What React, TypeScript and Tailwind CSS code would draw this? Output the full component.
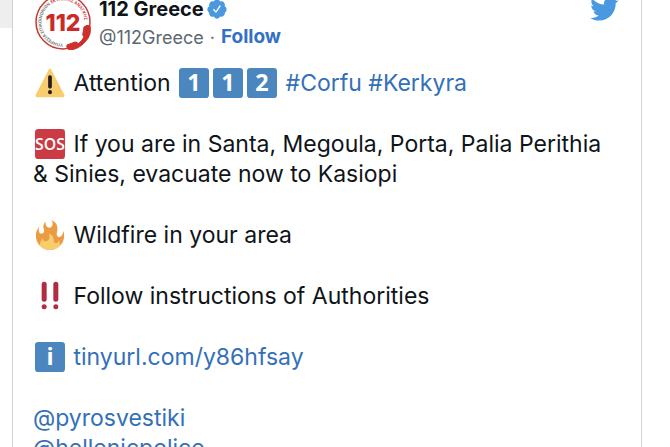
import React from 'react';

const KeycapEmoji: React.FC<{ label: string }> = ({ label }) => (
  <svg viewBox="0 0 36 36" className="mx-0.5 inline-block size-[30px] align-[-7px]">
    <rect width="36" height="36" rx="4" fill="#4c86be" />
    <text x="18" y="28" textAnchor="middle" fontSize="28" fontWeight="700" fill="#fff" fontFamily="Open Sans, sans-serif">
      {label}
    </text>
  </svg>
);

const WarningEmoji = () => (
  <svg viewBox="0 0 36 36" className="mx-0.5 inline-block size-[30px] align-[-7px]">
    <path fill="#f7cd6e" d="M2.653 35C.811 35-.001 33.662.847 32.027L16.456 1.972c.849-1.635 2.238-1.635 3.087 0l15.609 30.056c.85 1.634.037 2.972-1.805 2.972H2.653z" />
    <path fill="#231f20" d="M15.583 28.953a2.421 2.421 0 0 1 2.419-2.418 2.421 2.421 0 0 1 2.418 2.418 2.422 2.422 0 0 1-2.418 2.419 2.421 2.421 0 0 1-2.419-2.419zm.186-18.293c0-1.302.961-2.108 2.232-2.108 1.241 0 2.233.837 2.233 2.108v11.938c0 1.271-.992 2.108-2.233 2.108-1.271 0-2.232-.807-2.232-2.108V10.66z" />
  </svg>
);

const SosEmoji = () => (
  <svg viewBox="0 0 36 36" className="mx-0.5 inline-block size-[30px] align-[-7px]">
    <rect width="36" height="36" rx="4" fill="#cb3b46" />
    <text x="18" y="25" textAnchor="middle" fontSize="19" fontWeight="600" fill="#fff" fontFamily="Open Sans, sans-serif">
      SOS
    </text>
  </svg>
);

const FireEmoji = () => (
  <svg viewBox="0 0 36 36" className="mx-0.5 inline-block size-[30px] align-[-7px]">
    <path fill="#eb9c42" d="M35 19c0-2.062-.367-4.039-1.04-5.868-.46 5.389-3.333 8.157-6.335 6.868-2.812-1.208-.917-5.917-.777-8.164.236-3.809-.012-8.169-6.931-11.794 2.875 5.5.333 8.917-2.333 9.125-2.958.231-5.667-2.542-4.667-7.042-3.238 2.386-3.332 6.402-2.333 9 1.042 2.708-.042 4.958-2.583 5.208-2.84.28-4.418-3.041-2.963-8.333C2.52 10.965 1 14.805 1 19c0 9.389 7.611 17 17 17s17-7.611 17-17z" />
    <path fill="#f7cd6e" d="M28.394 23.999c.148 3.084-2.561 4.293-4.019 3.709-2.106-.843-1.541-2.291-2.083-5.291s-2.625-5.083-5.708-6c2.25 6.333-1.247 8.667-3.08 9.084-1.872.426-3.753-.001-3.968-4.007C7.352 23.668 6 26.676 6 30c0 .368.023.73.055 1.09C9.125 34.124 13.342 36 18 36s8.875-1.876 11.945-4.91c.032-.36.055-.722.055-1.09 0-2.187-.584-4.236-1.606-6.001z" />
  </svg>
);

const BangEmoji = () => (
  <svg viewBox="0 0 36 36" className="mx-0.5 inline-block size-[30px] align-[-7px]" fill="#b32b42">
    <rect x="8" y="1" width="6" height="24" rx="3" />
    <circle cx="11" cy="31" r="3" />
    <rect x="22" y="1" width="6" height="24" rx="3" />
    <circle cx="25" cy="31" r="3" />
  </svg>
);

const Avatar = () => (
  <svg viewBox="0 0 56 56" className="size-14 shrink-0" aria-label="112 Greece">
    <defs>
      <path id="ring" d="M28 49.500a21.500 21.500 0 1 1 0-43 21.500 21.500 0 1 1 0 43" />
    </defs>
    <circle cx="28" cy="28" r="27" fill="#fff" stroke="#c23a36" strokeWidth="1.500" />
    <text fontSize="4.500" fontWeight="600" fontFamily="Roboto, sans-serif" fill="#77716f">
      <textPath href="#ring">
        ΥΠΗΡΕΣΙΑ ΕΠΙΚΟΙΝΩΝΙΩΝ <tspan fill="#c23a36">ΕΚΤΑΚΤΗΣ ΑΝΑΓΚΗΣ</tspan>
      </textPath>
    </text>
    <text x="28" y="37" textAnchor="middle" fontSize="23" fontWeight="800" fontFamily="Inter, sans-serif" fill="#cc2a27">
      112
    </text>
    {/* handset */}
    <path d="M49 33q3-3 6-1q2 9-5 16q-6 7-15 8q-4-1-3-5l8-3q3 0 3 2q4-3 6-7q-2-2-1-4z" fill="#cf2f2a" stroke="#cf2f2a" strokeLinejoin="round" />
  </svg>
);

const VerifiedBadge = () => (
  <svg viewBox="0 0 24 24" className="size-[22px]" fill="#4a99e0" aria-label="Verified account">
    <path d="M22.5 12.5c0-1.58-.875-2.95-2.148-3.6.154-.435.238-.905.238-1.4 0-2.21-1.71-3.998-3.818-3.998-.47 0-.92.084-1.336.25C14.818 2.415 13.51 1.5 12 1.5s-2.816.917-3.437 2.25c-.415-.165-.866-.25-1.336-.25-2.11 0-3.818 1.79-3.818 4 0 .494.083.964.237 1.4-1.272.65-2.147 2.018-2.147 3.6 0 1.495.782 2.798 1.942 3.486-.02.17-.032.34-.032.514 0 2.21 1.708 4 3.818 4 .47 0 .92-.086 1.335-.25.62 1.334 1.926 2.25 3.437 2.25 1.512 0 2.818-.916 3.437-2.25.415.163.865.248 1.336.248 2.11 0 3.818-1.79 3.818-4 0-.174-.012-.344-.033-.513 1.158-.687 1.943-1.99 1.943-3.484zm-6.616-3.334l-4.334 6.5c-.145.217-.382.334-.625.334-.143 0-.288-.04-.416-.126l-.115-.094-2.415-2.415c-.293-.293-.293-.768 0-1.06s.768-.294 1.06 0l1.77 1.767 3.825-5.74c.23-.345.696-.436 1.04-.207.346.23.44.696.21 1.04z" />
  </svg>
);

const TwitterBird = () => (
  <svg viewBox="0 0 24 24" className="size-[30px]" fill="#4a99e0">
    <path d="M23.643 4.937c-.835.37-1.732.62-2.675.733.962-.576 1.7-1.49 2.048-2.578-.9.534-1.897.922-2.958 1.13-.85-.904-2.06-1.47-3.4-1.47-2.572 0-4.658 2.086-4.658 4.66 0 .364.042.718.12 1.06-3.873-.195-7.304-2.05-9.602-4.868-.4.69-.63 1.49-.63 2.342 0 1.616.823 3.043 2.072 3.878-.764-.025-1.482-.234-2.11-.583v.06c0 2.257 1.605 4.14 3.737 4.568-.392.106-.803.162-1.227.162-.3 0-.593-.028-.877-.082.593 1.85 2.313 3.198 4.352 3.234-1.595 1.25-3.604 1.995-5.786 1.995-.376 0-.747-.022-1.112-.065 2.062 1.323 4.51 2.093 7.14 2.093 8.57 0 13.255-7.098 13.255-13.254 0-.2-.005-.402-.014-.602.91-.658 1.7-1.477 2.323-2.41z" />
  </svg>
);

const Link: React.FC<{ href: string; children: React.ReactNode }> = ({ href, children }) => (
  <a href={href} className="text-[#3470b8] hover:underline">
    {children}
  </a>
);

export default function App() {
  return (
    <div className="flex h-screen overflow-hidden bg-white font-['Inter',sans-serif] text-[#0f1419]">
      <div className="h-7 w-3 shrink-0 bg-[#eeeeee]" />

      <article className="mr-7 min-w-0 flex-1 border-x border-[#cfd4d8] pl-5">
        {/* Header */}
        <header className="-mt-1.5 flex items-start gap-2 pr-[22px] pl-0.5">
          <Avatar />
          <div className="flex-1">
            <div className="flex h-[30px] items-center gap-0.5 text-[20px] font-bold">
              112 Greece
              <VerifiedBadge />
            </div>
            <div className="flex h-[26px] items-center gap-1.5 text-[18px] text-[#5b6871]">
              <span>@112Greece</span>
              <span>·</span>
              <a href="#follow" className="text-[19px] font-bold text-[#3470c4]">Follow</a>
            </div>
          </div>
          <a href="#tweet" aria-label="View on Twitter">
            <TwitterBird />
          </a>
        </header>

        {/* Tweet text */}
        <div className="mt-[18px] flex flex-col gap-[31px] text-[23px] leading-[30px] whitespace-nowrap">
          <p>
            <WarningEmoji /> Attention <KeycapEmoji label="1" />
            <KeycapEmoji label="1" />
            <KeycapEmoji label="2" /> <Link href="#corfu">#Corfu</Link> <Link href="#kerkyra">#Kerkyra</Link>
          </p>
          <p>
            <SosEmoji /> If you are in Santa, Megoula, Porta, Palia Perithia
            <br />
            &amp; Sinies, evacuate now to Kasiopi
          </p>
          <p>
            <FireEmoji /> Wildfire in your area
          </p>
          <p>
            <BangEmoji /> Follow instructions of Authorities
          </p>
          <p>
            <KeycapEmoji label="i" /> <Link href="#tinyurl">tinyurl.com/y86hfsay</Link>
          </p>
          <p>
            <Link href="#pyrosvestiki">@pyrosvestiki</Link>
            <br />
            <Link href="#hellenicpolice">@hellenicpolice</Link>
          </p>
        </div>
      </article>
    </div>
  );
}
